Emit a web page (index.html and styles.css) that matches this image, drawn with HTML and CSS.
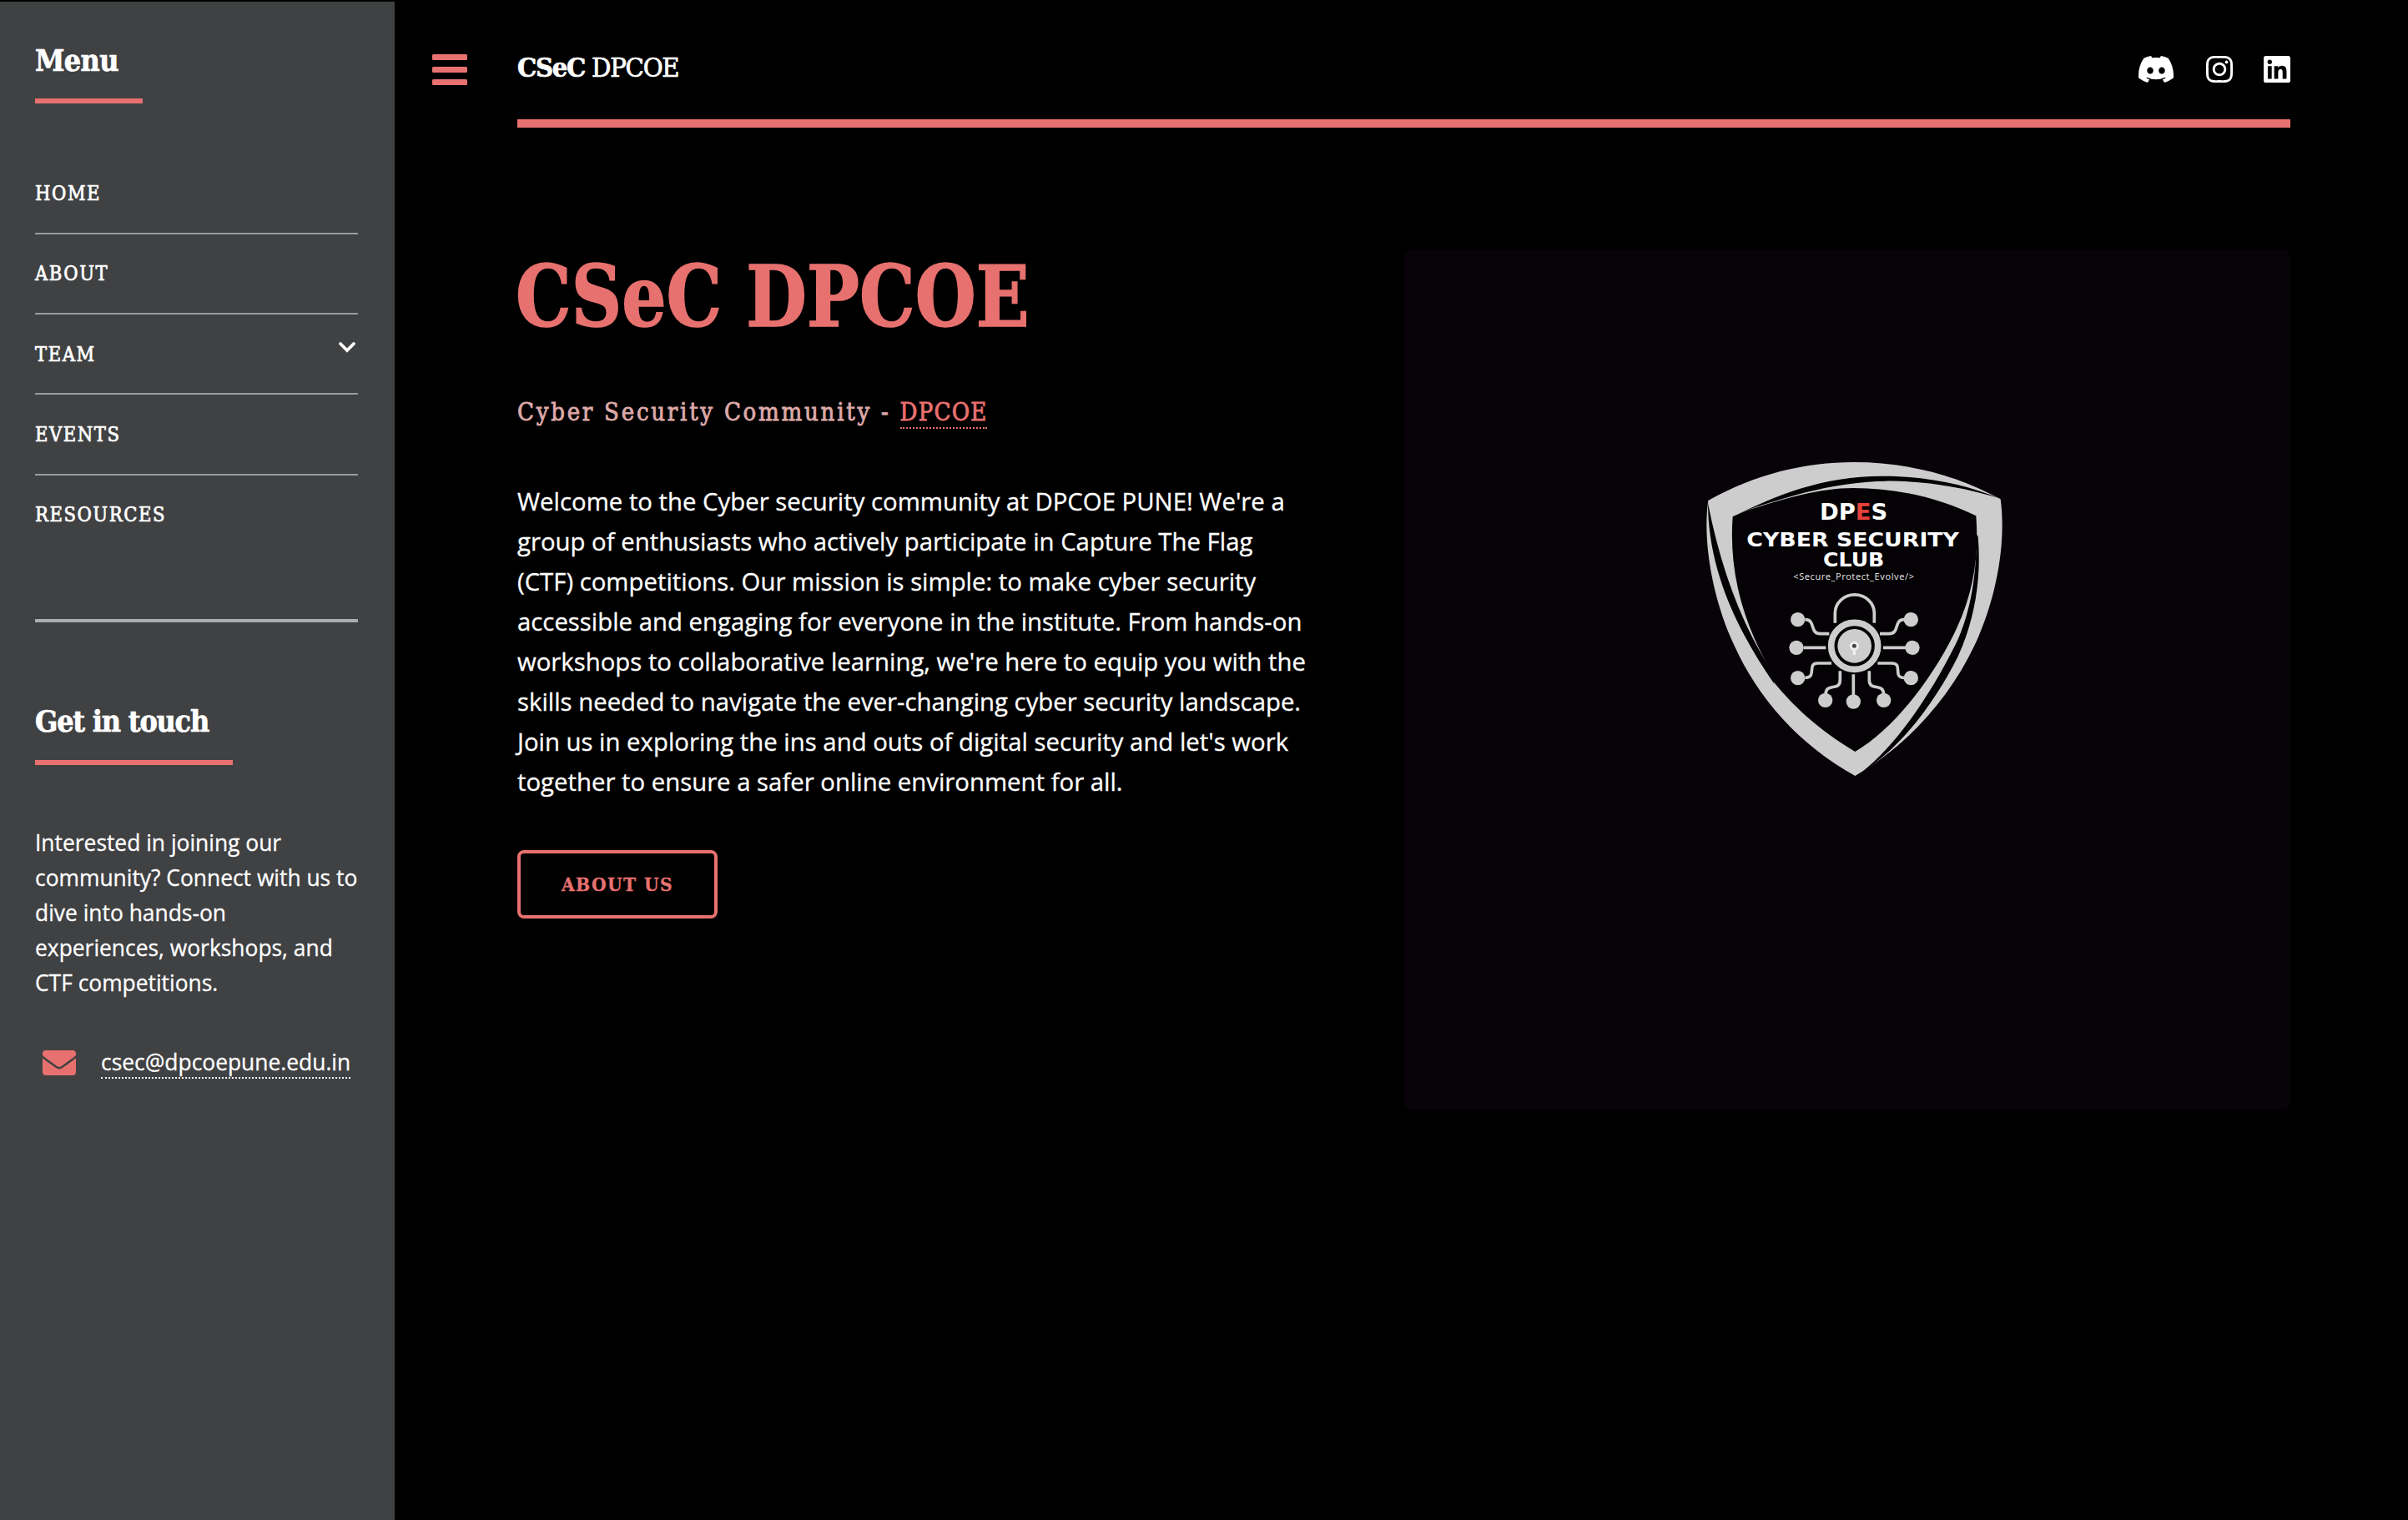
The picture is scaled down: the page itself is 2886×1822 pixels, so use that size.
FILE: index.html
```
<!DOCTYPE html>
<html lang="en">
<head>
  <meta charset="utf-8">
  <title>CSeC DPCOE</title>
  <link rel="stylesheet" href="styles.css">
</head>
<body>
  <aside class="sidebar">
    <h2 class="side-title side-title-menu">Menu</h2>
    <nav class="menu">
      <a class="menu-item" href="#">Home</a>
      <a class="menu-item" href="#">About</a>
      <a class="menu-item" href="#">Team
        <svg class="chevron" viewBox="0 0 22 14"><path d="M3 3l8 8 8-8" fill="none" stroke="#fff" stroke-width="3.8" stroke-linecap="round"/></svg>
      </a>
      <a class="menu-item" href="#">Events</a>
      <a class="menu-item" href="#">Resources</a>
    </nav>
    <section class="contact">
      <h2 class="side-title side-title-contact">Get in touch</h2>
      <p class="contact-text">Interested in joining our community? Connect with us to dive into hands-on experiences, workshops, and CTF competitions.</p>
      <div class="contact-mail">
        <svg class="mail-icon" viewBox="0 64 512 384"><path fill="#e7716f" d="M502.3 190.8c3.900-3.100 9.700-.2 9.700 4.700V400c0 26.500-21.500 48-48 48H48c-26.500 0-48-21.500-48-48V195.600c0-5 5.700-7.800 9.700-4.700 22.400 17.400 52.100 39.500 154.100 113.600 21.100 15.400 56.700 47.800 92.200 47.600 35.700.3 72-32.800 92.300-47.600 102-74.100 131.600-96.300 154-113.700zM256 320c23.200.4 56.600-29.200 73.400-41.400 132.700-96.300 142.800-104.700 173.400-128.700 5.800-4.500 9.200-11.500 9.200-18.900v-19c0-26.500-21.500-48-48-48H48c-26.500 0-48 21.500-48 48v19c0 7.400 3.400 14.300 9.200 18.900 30.600 23.900 40.700 32.400 173.400 128.700 16.800 12.200 50.200 41.800 73.400 41.400z"/></svg>
        <a class="mail-link" href="#">csec@dpcoepune.edu.in</a>
      </div>
    </section>
  </aside>

  <a class="toggle" href="#"><span></span><span></span><span></span></a>

  <main class="main">
    <header class="topbar">
      <a class="logo" href="#"><strong>CSeC</strong> DPCOE</a>
      <div class="social">
        <svg class="icon-discord" viewBox="0 0 127.14 96.36"><path fill="#fff" d="M107.700 8.070A105.150 105.150 0 0 0 81.470 0a72.060 72.060 0 0 0-3.360 6.830 97.680 97.680 0 0 0-29.110 0A72.370 72.370 0 0 0 45.640 0a105.890 105.890 0 0 0-26.250 8.090C2.790 32.650-1.710 56.600.54 80.210a105.730 105.730 0 0 0 32.170 16.150 77.700 77.700 0 0 0 6.890-11.110 68.420 68.420 0 0 1-10.850-5.180c.91-.66 1.800-1.340 2.660-2a75.570 75.570 0 0 0 64.320 0c.87.710 1.760 1.390 2.660 2a68.680 68.680 0 0 1-10.870 5.190 77 77 0 0 0 6.890 11.100 105.250 105.250 0 0 0 32.190-16.140c2.640-27.380-4.510-51.110-18.900-72.150zM42.450 65.690C36.180 65.690 31 60 31 53s5-12.740 11.430-12.740S54 46 53.890 53s-5.050 12.690-11.440 12.690zm42.240 0C78.410 65.690 73.250 60 73.250 53s5-12.740 11.440-12.740S96.230 46 96.120 53s-5.040 12.690-11.430 12.690z"/></svg>
        <svg class="icon-square" viewBox="0 32 448 448"><path fill="#fff" d="M224.100 141c-63.600 0-114.900 51.300-114.900 114.900s51.300 114.900 114.900 114.900S339 319.500 339 255.900 287.700 141 224.100 141zm0 189.600c-41.100 0-74.700-33.500-74.700-74.700s33.500-74.700 74.700-74.700 74.700 33.500 74.700 74.700-33.600 74.700-74.700 74.700zm146.400-194.300c0 14.900-12 26.800-26.800 26.800-14.900 0-26.800-12-26.800-26.800s12-26.800 26.800-26.800 26.800 12 26.800 26.800zm76.100 27.200c-1.700-35.900-9.900-67.700-36.200-93.900-26.200-26.200-58-34.400-93.900-36.200-37-2.100-147.900-2.100-184.900 0-35.800 1.700-67.600 9.900-93.900 36.100s-34.400 58-36.200 93.900c-2.100 37-2.100 147.900 0 184.900 1.700 35.900 9.900 67.700 36.200 93.900s58 34.400 93.900 36.200c37 2.100 147.900 2.100 184.900 0 35.900-1.700 67.700-9.900 93.900-36.200 26.200-26.200 34.400-58 36.200-93.900 2.100-37 2.100-147.800 0-184.800zM398.800 388c-7.800 19.600-22.900 34.700-42.600 42.600-29.500 11.700-99.500 9-132.100 9s-102.700 2.600-132.100-9c-19.600-7.800-34.700-22.900-42.600-42.600-11.700-29.500-9-99.500-9-132.100s-2.600-102.700 9-132.100c7.800-19.600 22.900-34.700 42.600-42.600 29.500-11.700 99.500-9 132.100-9s102.700-2.600 132.100 9c19.600 7.800 34.700 22.900 42.600 42.600 11.700 29.500 9 99.500 9 132.100s2.700 102.700-9 132.100z"/></svg>
        <svg class="icon-square" viewBox="0 32 448 448"><path fill="#fff" d="M416 32H31.900C14.300 32 0 46.500 0 64.300v383.400C0 465.500 14.300 480 31.900 480H416c17.600 0 32-14.500 32-32.300V64.300c0-17.800-14.400-32.300-32-32.300zM135.400 416H69V202.200h66.500V416zm-33.200-243c-21.300 0-38.500-17.300-38.500-38.500S80.900 96 102.200 96c21.200 0 38.500 17.300 38.500 38.500 0 21.300-17.200 38.500-38.500 38.500zm282.100 243h-66.400V312c0-24.800-.5-56.700-34.500-56.700-34.600 0-39.900 27-39.900 54.900V416h-66.400V202.200h63.700v29.200h.9c8.900-16.800 30.600-34.500 62.900-34.500 67.200 0 79.700 44.300 79.700 101.900V416z"/></svg>
      </div>
    </header>

    <section class="banner">
      <div class="content">
        <h1 class="headline">CSeC DPCOE</h1>
        <p class="subtitle">Cyber Security Community - <a class="subtitle-link" href="#">DPCOE</a></p>
        <p class="intro">Welcome to the Cyber security community at DPCOE PUNE! We're a group of enthusiasts who actively participate in Capture The Flag (CTF) competitions. Our mission is simple: to make cyber security accessible and engaging for everyone in the institute. From hands-on workshops to collaborative learning, we're here to equip you with the skills needed to navigate the ever-changing cyber security landscape. Join us in exploring the ins and outs of digital security and let's work together to ensure a safer online environment for all.</p>
        <a class="button" href="#">About us</a>
      </div>
      <div class="picture">
        <svg class="shield" viewBox="0 0 1170 1200">
          <path fill="#cdcdcd" d="M52 180C220 85 400 42 575 42C770 42 950 90 1103 175C1125 340 1085 540 1010 700C920 890 770 1060 580 1170C380 1060 230 890 145 700C70 540 30 330 52 180Z"/>
          <path class="ink" d="M140 238L190 216C330 172 450 135 575 135C730 135 880 170 1015 235C1025 370 1010 500 945 640C880 780 740 990 580 1083C450 1005 350 915 270 810L270 780C180 620 125 440 140 238Z"/>
          <path class="ink" d="M140 238C300 160 460 92 680 92C850 92 990 128 1095 170C960 130 820 108 690 110C520 112 350 160 190 215Z"/>
          <path class="ink" d="M51 190C52 400 130 610 290 840L275 785C170 620 96 420 51 190Z"/>
          <path class="ink" d="M1016 300C1018 460 990 600 940 700C860 860 740 1050 600 1160C760 1060 880 880 950 740C1010 610 1035 460 1022 310Z"/>
          <g class="label">
            <text x="453" y="250" font-size="78" textLength="244" lengthAdjust="spacingAndGlyphs">DP<tspan fill="#e8403a">E</tspan>S</text>
            <text x="190" y="345" font-size="71" textLength="764" lengthAdjust="spacingAndGlyphs">CYBER SECURITY</text>
            <text x="465" y="416" font-size="68" textLength="220" lengthAdjust="spacingAndGlyphs">CLUB</text>
          </g>
          <text class="tagline" x="358" y="465" font-size="33" textLength="434">&lt;Secure_Protect_Evolve/&gt;</text>
          <g fill="none" stroke="#cdcdcd" stroke-width="11">
            <path d="M508 620V585A70 66 0 0 1 649 585V620"/>
            <circle cx="578" cy="703" r="84" stroke-width="23"/>
            <path d="M400 608C440 608 415 659 455 659H487M395 709H475M400 817C445 817 405 765 445 765H495M474 880C474 830 526 870 526 825V793M574 805V885M683 880C683 830 631 870 631 825V793M757 817C712 817 755 765 712 765H661M765 709H681M757 608C717 608 742 659 702 659H669"/>
          </g>
          <g fill="#cdcdcd">
            <circle cx="578" cy="703" r="61"/>
            <circle cx="374" cy="608" r="26"/><circle cx="369" cy="709" r="26"/><circle cx="374" cy="818" r="26"/>
            <circle cx="473" cy="898" r="26"/><circle cx="574" cy="903" r="26"/><circle cx="683" cy="898" r="26"/>
            <circle cx="781" cy="818" r="26"/><circle cx="786" cy="709" r="26"/><circle cx="781" cy="608" r="26"/>
          </g>
          <circle cx="577" cy="703" r="12" fill="#444" stroke="#efefef" stroke-width="9"/>
          <path d="M577 718V731" stroke="#efefef" stroke-width="10" stroke-linecap="round"/>
        </svg>
      </div>
    </section>
  </main>
</body>
</html>
```

FILE: styles.css
```
* { box-sizing: border-box; }

body {
  margin: 0;
  min-height: 1822px;
  display: flex;
  align-items: stretch;
  background: #000;
  color: #fff;
  font-family: "Open Sans", sans-serif;
  font-size: 29.33px;
  -webkit-text-stroke: 0.3px currentColor;
}

a { color: inherit; text-decoration: none; }
h1, h2, p { margin: 0; }
svg { display: block; flex: none; }

.sidebar {
  width: 473px;
  margin-top: 2px;
  padding: 47px 44px 0 42px;
  background: #404143;
}

.side-title {
  border-bottom: 6px solid #e7716f;
  font-family: "DejaVu Serif Condensed", "DejaVu Serif", serif;
  font-stretch: condensed;
  font-size: 35.6px;
  line-height: 48px;
  white-space: nowrap;
  -webkit-text-stroke: 0.7px currentColor;
}
.side-title-menu { width: 129px; padding-bottom: 21px; letter-spacing: -0.6px; }
.side-title-contact { width: 237px; padding-bottom: 22px; letter-spacing: -1.2px; }

.menu {
  margin-top: 61px;
  height: 561px;
  border-bottom: 4px solid #abacad;
}
.menu-item {
  display: flex;
  justify-content: space-between;
  height: 96.15px;
  padding-top: 27.3px;
  border-bottom: 2px solid #9b9c9d;
  font-family: "DejaVu Serif Condensed", "DejaVu Serif", serif;
  font-stretch: condensed;
  font-size: 23.5px;
  line-height: 40px;
  letter-spacing: 1.55px;
  text-transform: uppercase;
  -webkit-text-stroke: 0.7px currentColor;
}
.menu-item:last-child { border-bottom: 0; }
.chevron { width: 22px; height: 14px; margin: 4px 2px 0 0; }

.contact { padding-top: 95px; }
.contact-text {
  margin-top: 72px;
  font-size: 26.4px;
  line-height: 42px;
}
.contact-mail {
  display: flex;
  align-items: flex-start;
  gap: 30px;
  margin-top: 53px;
  padding-left: 9px;
}
.mail-icon { width: 40px; height: 30px; margin-top: 7px; }
.mail-link {
  height: 41px;
  border-bottom: 2px dotted #fff;
  font-size: 26.4px;
  line-height: 42px;
}

.toggle {
  display: flex;
  flex-direction: column;
  gap: 8px;
  width: 42px;
  margin: 65px 60px 0 45px;
}
.toggle span { height: 7px; border-radius: 1.500px; background: #e7716f; }

.main { width: 2125px; }

.topbar {
  display: flex;
  justify-content: space-between;
  height: 153px;
  padding-top: 57px;
  border-bottom: 10px solid #e7716f;
}
.logo {
  font-family: "DejaVu Serif Condensed", "DejaVu Serif", serif;
  font-stretch: condensed;
  font-size: 32.5px;
  line-height: 48px;
  letter-spacing: -1.3px;
  -webkit-text-stroke: 0.7px currentColor;
}
.social { display: flex; align-items: flex-start; padding-top: 10px; }
.icon-discord { width: 42px; height: 32px; margin-right: 39px; }
.icon-square { width: 32px; height: 32px; }
.icon-square + .icon-square { margin-left: 37px; }

.banner {
  display: flex;
  justify-content: space-between;
  padding-top: 146px;
}
.content { width: 950px; padding-top: 1px; }
.headline {
  margin-left: -2px;
  color: #e7716f;
  font-family: "DejaVu Serif Condensed", "DejaVu Serif", serif;
  font-stretch: condensed;
  font-size: 101px;
  line-height: 112px;
  white-space: nowrap;
  transform: scaleX(0.922);
  transform-origin: left;
  -webkit-text-stroke: 1.5px currentColor;
}
.subtitle {
  margin-top: 58px;
  color: #dda9a7;
  font-family: "DejaVu Serif Condensed", "DejaVu Serif", serif;
  font-stretch: condensed;
  font-size: 29px;
  line-height: 48px;
  letter-spacing: 2.75px;
  -webkit-text-stroke: 0.8px currentColor;
}
.subtitle-link {
  padding-bottom: 1px;
  border-bottom: 2px dotted #e7716f;
  color: #e7716f;
  letter-spacing: 1.2px;
}
.intro { margin-top: 59px; line-height: 48px; }
.button {
  display: flex;
  align-items: center;
  justify-content: center;
  width: 240px;
  height: 82px;
  margin-top: 58px;
  border: 4px solid #e7716f;
  border-radius: 8px;
  color: #e7716f;
  font-family: "DejaVu Serif Condensed", "DejaVu Serif", serif;
  font-stretch: condensed;
  font-size: 22.5px;
  font-weight: bold;
  letter-spacing: 1.4px;
  text-transform: uppercase;
}

.picture {
  width: 1062px;
  height: 1031px;
  padding: 241px 0 0 347px;
  border-radius: 10px;
  background: #070308;
}
.shield { width: 390px; height: 400px; }
.shield .ink { fill: #050206; }
.label { fill: #fff; font-family: "DejaVu Sans", sans-serif; font-weight: bold; }
.tagline { fill: #ddd; font-family: "Noto Sans", sans-serif; }
```
